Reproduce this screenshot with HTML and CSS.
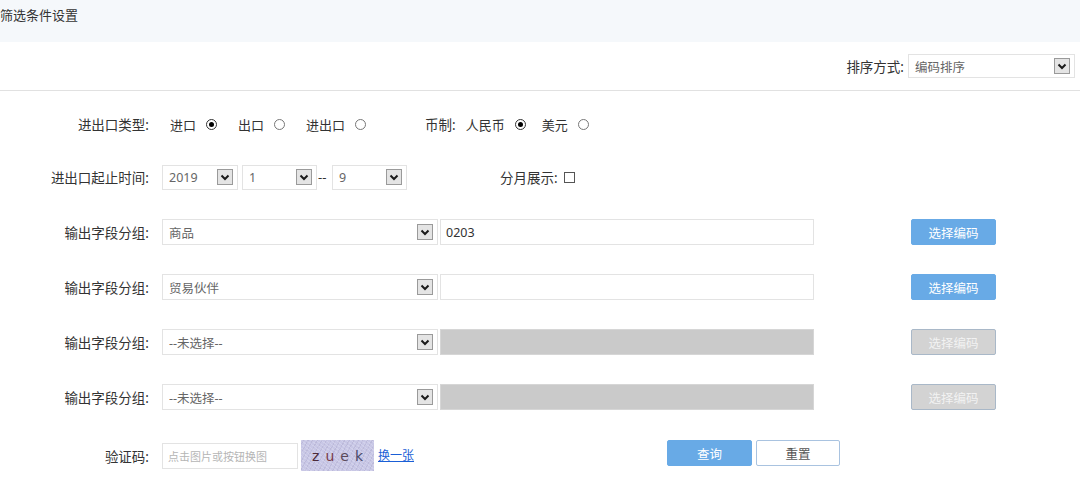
FILE: index.html
```html
<!DOCTYPE html>
<html lang="zh">
<head>
<meta charset="utf-8">
<link rel="stylesheet" href="styles.css">
</head>
<body>
<div class="header">筛选条件设置</div>
<div class="sortbar">
  <span class="sort-label">排序方式:</span>
  <div class="sel sel-sort"><span>编码排序</span><svg class="arr" viewBox="0 0 16 16"><rect x="0.5" y="0.5" width="15" height="15" fill="#e4e4e4" stroke="#9a9a9a"/><path d="M4.5 6.5 L8 10 L11.5 6.5" fill="none" stroke="#1a1a1a" stroke-width="2"/></svg></div>
</div>
<div class="form">
  <div class="row row-type">
    <label class="lbl">进出口类型:</label>
    <span class="opt">进口</span><span class="radio on"></span>
    <span class="opt">出口</span><span class="radio"></span>
    <span class="opt">进出口</span><span class="radio"></span>
    <span class="cur-label">币制:</span>
    <span class="opt first">人民币</span><span class="radio on"></span>
    <span class="opt usd">美元</span><span class="radio"></span>
  </div>
  <div class="row">
    <label class="lbl">进出口起止时间:</label>
    <div class="sel sel-year"><span>2019</span><svg class="arr" viewBox="0 0 16 16"><rect x="0.5" y="0.5" width="15" height="15" fill="#e4e4e4" stroke="#9a9a9a"/><path d="M4.5 6.5 L8 10 L11.5 6.5" fill="none" stroke="#1a1a1a" stroke-width="2"/></svg></div>
    <div class="sel sel-month"><span>1</span><svg class="arr" viewBox="0 0 16 16"><rect x="0.5" y="0.5" width="15" height="15" fill="#e4e4e4" stroke="#9a9a9a"/><path d="M4.5 6.5 L8 10 L11.5 6.5" fill="none" stroke="#1a1a1a" stroke-width="2"/></svg></div>
    <span class="dash">--</span>
    <div class="sel sel-month2"><span>9</span><svg class="arr" viewBox="0 0 16 16"><rect x="0.5" y="0.5" width="15" height="15" fill="#e4e4e4" stroke="#9a9a9a"/><path d="M4.5 6.5 L8 10 L11.5 6.5" fill="none" stroke="#1a1a1a" stroke-width="2"/></svg></div>
    <span class="month-label">分月展示:</span><span class="check"></span>
  </div>
  <div class="row">
    <label class="lbl">输出字段分组:</label>
    <div class="sel sel-field"><span>商品</span><svg class="arr" viewBox="0 0 16 16"><rect x="0.5" y="0.5" width="15" height="15" fill="#e4e4e4" stroke="#9a9a9a"/><path d="M4.5 6.5 L8 10 L11.5 6.5" fill="none" stroke="#1a1a1a" stroke-width="2"/></svg></div>
    <div class="inp inp-code">0203</div>
    <button class="btn-code">选择编码</button>
  </div>
  <div class="row">
    <label class="lbl">输出字段分组:</label>
    <div class="sel sel-field"><span>贸易伙伴</span><svg class="arr" viewBox="0 0 16 16"><rect x="0.5" y="0.5" width="15" height="15" fill="#e4e4e4" stroke="#9a9a9a"/><path d="M4.5 6.5 L8 10 L11.5 6.5" fill="none" stroke="#1a1a1a" stroke-width="2"/></svg></div>
    <div class="inp inp-code"></div>
    <button class="btn-code">选择编码</button>
  </div>
  <div class="row">
    <label class="lbl">输出字段分组:</label>
    <div class="sel sel-field"><span>--未选择--</span><svg class="arr" viewBox="0 0 16 16"><rect x="0.5" y="0.5" width="15" height="15" fill="#e4e4e4" stroke="#9a9a9a"/><path d="M4.5 6.5 L8 10 L11.5 6.5" fill="none" stroke="#1a1a1a" stroke-width="2"/></svg></div>
    <div class="inp inp-code disabled"></div>
    <button class="btn-code disabled">选择编码</button>
  </div>
  <div class="row">
    <label class="lbl">输出字段分组:</label>
    <div class="sel sel-field"><span>--未选择--</span><svg class="arr" viewBox="0 0 16 16"><rect x="0.5" y="0.5" width="15" height="15" fill="#e4e4e4" stroke="#9a9a9a"/><path d="M4.5 6.5 L8 10 L11.5 6.5" fill="none" stroke="#1a1a1a" stroke-width="2"/></svg></div>
    <div class="inp inp-code disabled"></div>
    <button class="btn-code disabled">选择编码</button>
  </div>
  <div class="row row-captcha">
    <label class="lbl">验证码:</label>
    <div class="inp inp-captcha"><span class="ph">点击图片或按钮换图</span></div>
    <div class="captcha"><span class="c1">z</span><span class="c2">u</span><span class="c3">e</span><span class="c4">k</span></div>
    <a class="swap" href="#">换一张</a>
    <button class="btn-query">查询</button>
    <button class="btn-reset">重置</button>
  </div>
</div>
</body>
</html>
```

FILE: styles.css
```css
* { box-sizing: border-box; }
body {
  margin: 0;
  font-family: "Noto Sans", "Noto Sans CJK SC", sans-serif;
  font-size: 13px;
  color: #333;
  background: #fff;
}
.header {
  height: 42px;
  background: #f5f8fb;
  padding: 5px 0 0 0;
  line-height: 20px;
  font-size: 13px;
  color: #333;
}
.sortbar {
  height: 49px;
  border-bottom: 1px solid #e1e1e1;
  display: flex;
  justify-content: flex-end;
  align-items: center;
  padding-right: 5px;
}
.sort-label { margin-right: 4px; font-size: 13.5px; }
.sel {
  display: flex;
  align-items: center;
  justify-content: space-between;
  height: 25px;
  border: 1px solid #e3e3e3;
  background: #fff;
  padding: 0 4px 0 6px;
  font-size: 12.5px;
  color: #666;
}
.sel .arr { width: 16px; height: 16px; flex: none; }
.sel-sort { width: 167px; height: 24px; }
.form {
  display: flex;
  flex-direction: column;
  gap: 29px;
  padding-top: 20px;
}
.row {
  display: flex;
  align-items: center;
  height: 26px;
}
.row-type { margin-bottom: -2px; }
.row-captcha { height: 31px; margin-top: 1px; align-items: flex-start; }
.row-captcha .lbl { align-self: center; }
.lbl {
  width: 149px;
  text-align: right;
  margin-right: 13px;
  font-size: 13.5px;
  color: #333;
  flex: none;
}
.opt { margin-left: 21px; font-size: 13px; }
.row-type .lbl + .opt { margin-left: 8px; }
.opt.first { margin-left: 10px; }
.opt.usd { margin-left: 16px; }
.radio {
  width: 11px;
  height: 11px;
  border: 1px solid #777;
  border-radius: 50%;
  margin-left: 10px;
  position: relative;
  flex: none;
}
.radio.on { border-color: #333; }
.radio.on::after {
  content: "";
  position: absolute;
  left: 2px;
  top: 2px;
  width: 5px;
  height: 5px;
  border-radius: 50%;
  background: #000;
}
.cur-label { margin-left: 59px; font-size: 13.5px; }
.sel-year { width: 76px; }
.sel-month { width: 75px; margin-left: 4px; }
.sel-month2 { width: 75px; }
.dash { width: 15px; text-align: left; padding-left: 1px; color: #333; }
.month-label { margin-left: 93px; font-size: 13.5px; }
.check {
  width: 11px;
  height: 11px;
  border: 1px solid #555;
  margin-left: 6px;
}
.sel-field { width: 276px; height: 26px; }
.inp {
  height: 26px;
  border: 1px solid #e3e3e3;
  background: #fff;
  font-size: 12.5px;
  color: #333;
  display: flex;
  align-items: center;
  padding-left: 5px;
}
.inp-code { width: 374px; margin-left: 2px; }
.inp.disabled { background: #cacaca; border-color: #d6d6d6; }
button {
  font-family: "Noto Sans CJK SC", sans-serif;
  font-size: 12.5px;
  border-radius: 2px;
  cursor: pointer;
}
.btn-code {
  width: 85px;
  height: 26px;
  margin-left: 97px;
  background: #68aae6;
  border: 1px solid #68aae6;
  color: #fff;
}
.btn-code.disabled {
  background: #d3d3d3;
  border-color: #a9b8c8;
  color: #f2f2f2;
}
.inp-captcha { width: 136px; height: 26px; align-self: center; }
.ph { color: #b5b5b5; font-size: 11px; font-family: "Noto Sans CJK SC", sans-serif; }
.captcha {
  width: 73px;
  height: 31px;
  margin-left: 3px;
  background-color: #c8c7e6;
  background-image:
    repeating-linear-gradient(37deg, rgba(255,255,255,0.18) 0 1px, transparent 1px 3px),
    repeating-linear-gradient(-61deg, rgba(120,110,150,0.15) 0 1px, transparent 1px 4px);
  display: flex;
  align-items: center;
  justify-content: center;
  gap: 6px;
  font-family: "DejaVu Sans", sans-serif;
  font-size: 14px;
}
.c1 { color: #4c2a3a; }
.c2 { color: #7a3a4a; }
.c3 { color: #5a4a5a; }
.c4 { color: #4a4a6a; }
.swap {
  margin-left: 4px;
  color: #1a5fd6;
  font-size: 12px;
  text-decoration: underline;
  font-family: "Noto Sans CJK SC", sans-serif;
  align-self: center;
  margin-top: -3px;
}
.btn-query {
  width: 85px;
  height: 26px;
  margin-left: 253px;
  background: #68aae6;
  border: 1px solid #68aae6;
  color: #fff;
}
.btn-reset {
  width: 84px;
  height: 26px;
  margin-left: 4px;
  background: #fff;
  border: 1px solid #a9c3e0;
  color: #555;
}
```
